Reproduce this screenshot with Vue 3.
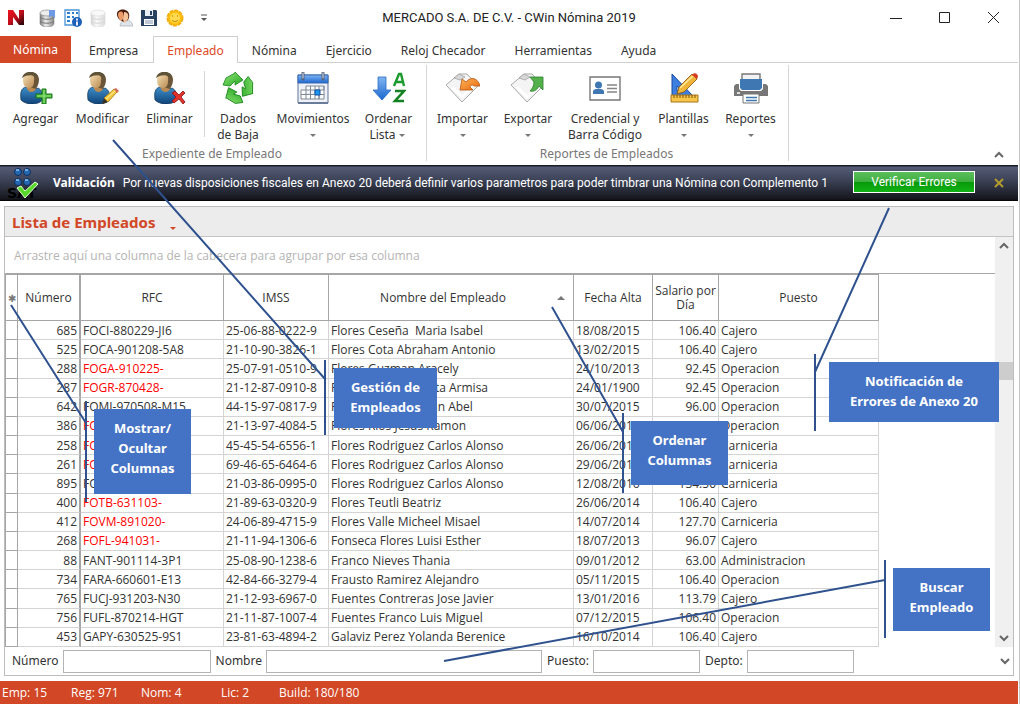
<template>
  <div class="window">
    <svg class="sprite" aria-hidden="true">
      <defs>
        <linearGradient id="gBody" x1="0" y1="0" x2="0" y2="1">
          <stop offset="0" stop-color="#3f8fca" />
          <stop offset="1" stop-color="#0f4379" />
        </linearGradient>
        <linearGradient id="gFace" x1="0" y1="0" x2="1" y2="1">
          <stop offset="0" stop-color="#f6e0b4" />
          <stop offset="1" stop-color="#b98a52" />
        </linearGradient>
        <linearGradient id="gGreen" x1="0" y1="0" x2="1" y2="1">
          <stop offset="0" stop-color="#94e877" />
          <stop offset="1" stop-color="#23a423" />
        </linearGradient>
        <linearGradient id="gBlue" x1="0" y1="0" x2="0" y2="1">
          <stop offset="0" stop-color="#7fb6f2" />
          <stop offset="1" stop-color="#1c66cf" />
        </linearGradient>
        <linearGradient id="gOrange" x1="0" y1="0" x2="1" y2="1">
          <stop offset="0" stop-color="#ffb45a" />
          <stop offset="1" stop-color="#e8680c" />
        </linearGradient>
        <linearGradient id="gLogo" x1="0" y1="0" x2="1" y2="1">
          <stop offset="0" stop-color="#f0141e" />
          <stop offset="0.5" stop-color="#c00d1b" />
          <stop offset="1" stop-color="#1b0206" />
        </linearGradient>
        <linearGradient id="gDisk" x1="0" y1="0" x2="1" y2="0">
          <stop offset="0" stop-color="#777" />
          <stop offset="0.4" stop-color="#eee" />
          <stop offset="1" stop-color="#888" />
        </linearGradient>
      </defs>
      <symbol id="person" viewBox="0 0 32 32">
        <path d="M1 28C0 21 1 16 6 15l7 3 5-2c4 2 5 6 5 11-3 6-16 7-22 1z" fill="url(#gBody)" stroke="#0d3358" stroke-width=".7" />
        <path d="M7 13v4c2 4 7 4 9 0v-4z" fill="#b98a52" />
        <path d="M9 2c5-3 10 0 10 6 0 4-2 7-3 9l-6-2z" fill="#6b5539" />
        <path d="M3 8c0-4 3-6 6-6 4 0 6 3 5 7 0 5-2 7-5 7-4 0-6-3-6-8z" fill="url(#gFace)" />
        <path d="M2 6C3 1 8-1 13 0c3 1 5 3 5 6-4-3-10-4-16 0z" fill="#5e5238" />
      </symbol>
      <symbol id="agregar" viewBox="0 0 32 32">
        <use href="#person" width="32" height="32" />
        <path d="M22 17h4v5h6v4h-6v6h-4v-6h-6v-4h6z" fill="#4dbb3d" stroke="#14701a" />
        <path d="M24 18v13M17 24h14" stroke="#9be283" stroke-width="1" />
      </symbol>
      <symbol id="modificar" viewBox="0 0 32 32">
        <use href="#person" width="32" height="32" />
        <path d="M15 32l2-6 4 4z" fill="#3b3021" />
        <path d="M17 26L27 17l3 3-9 10z" fill="#f5c93c" stroke="#a67714" stroke-width=".8" />
        <path d="M27 17l2-1 3 3-2 2z" fill="#d96b5c" />
        <path d="M19 27l9-8" stroke="#fff0a8" />
      </symbol>
      <symbol id="eliminar" viewBox="0 0 32 32">
        <use href="#person" width="32" height="32" />
        <path d="M18 21l3-2 4 4 4-4 2 2-4 4 4 5-2 2-4-5-5 4-2-2 4-4z" fill="#e0322d" stroke="#8d1010" stroke-width=".8" />
      </symbol>
      <symbol id="flecha" viewBox="0 0 32 32">
        <path d="M1 13l3-7 9-5V0l8 8-8 5V9l-5 5z" fill="url(#gGreen)" stroke="#178517" stroke-width=".8" />
      </symbol>
      <symbol id="reciclar" viewBox="0 0 32 32">
        <use href="#flecha" width="32" height="32" />
        <use href="#flecha" width="32" height="32" transform="rotate(120 16 16)" />
        <use href="#flecha" width="32" height="32" transform="rotate(240 16 16)" />
      </symbol>
      <symbol id="calendario" viewBox="0 0 32 32">
        <path d="M1 3h30v28H1z" fill="#eef2f8" stroke="#5e7394" />
        <path d="M1 3h30v8H1z" fill="url(#gBlue)" stroke="#3569b4" />
        <path d="M1 31h30" stroke="#6a7c99" stroke-width="2" />
        <path d="M9 14h18v4h-5v9H4v-9h5zM4 22.500h23V14M9 18h13M9 18v9M13.500 14v13M18 14v13M22 14v13M27 22v5h-5" fill="#fff" stroke="#7f8794" />
        <path d="M18 18h5v5h-5z" fill="#1d96ee" stroke="#1250a8" />
        <path d="M6 1v6M26 1v6" stroke="#53617a" stroke-width="3" stroke-linecap="round" />
        <path d="M6 1v5M26 1v5" stroke="#dce4f0" stroke-linecap="round" />
      </symbol>
      <symbol id="ordenar" viewBox="0 0 32 32">
        <path d="M4 5h8v13h5L8 28l-9-10h5z" transform="translate(1 0)" fill="url(#gBlue)" stroke="#2b6cc4" stroke-width=".8" />
        <path d="M21 14l5-12h2l3 12M23 10h7" fill="none" stroke="#199a2c" stroke-width="2.400" />
        <path d="M22 19h9L22 29h9" fill="none" stroke="#138222" stroke-width="2.600" />
      </symbol>
      <symbol id="hoja" viewBox="0 0 32 32">
        <path d="M0 13L13 2l8 0 11 12-16 16z" fill="#f4f4f4" stroke="#a9a9a9" />
        <path d="M8 6l5-4 6 3-5 3z" fill="#d8d8d8" stroke="#999" stroke-width=".7" />
        <path d="M6 15l10 10 10-10" fill="none" stroke="#fff" stroke-width="3" />
      </symbol>
      <symbol id="importar" viewBox="0 0 34 32">
        <use href="#hoja" width="32" height="32" />
        <path d="M14 18l2-11 4 3c5-6 12-4 14 4l-6 0c-2-2-3-1-4 1l3 3z" fill="url(#gOrange)" stroke="#b5560f" stroke-width=".8" />
      </symbol>
      <symbol id="exportar" viewBox="0 0 34 32">
        <use href="#hoja" width="32" height="32" />
        <path d="M19 5h13v13l-4-4c-2 4-5 6-9 5 2-2 4-5 4-9z" fill="#54b04a" stroke="#2c7d2c" stroke-width=".8" />
      </symbol>
      <symbol id="credencial" viewBox="0 0 32 32">
        <path d="M1 5h30v23H1z" fill="#fff" stroke="#777" stroke-width="1.400" />
        <circle cx="9.500" cy="13" r="3.500" fill="#3f77b3" />
        <path d="M4 22v-3c1-2 3-2 5.500-2s4.500 0 5.500 2v3z" fill="#3f77b3" />
        <path d="M18 13h10M18 16.500h10M18 20h10" stroke="#858585" stroke-width="1.600" />
      </symbol>
      <symbol id="plantillas" viewBox="0 0 32 32">
        <path d="M4 2l21 22H4zM9 14v5h5z" fill="#3c7fe0" stroke="#174d9e" fill-rule="evenodd" />
        <path d="M3 23h27v7H3z" fill="#f7c547" stroke="#a9741a" />
        <path d="M6 23v3M9 23v3M12 23v3M15 23v3M18 23v3M21 23v3M24 23v3M27 23v3" stroke="#80560d" />
        <path d="M9 22l2-7L24 2l5 5-13 13z" fill="#efb539" stroke="#7c4e10" stroke-width=".8" />
        <path d="M12 16L25 4" stroke="#ffe9a0" stroke-width="1.500" />
        <path d="M24 3c3-4 8 0 5 4z" fill="#d63c22" />
      </symbol>
      <symbol id="impresora" viewBox="0 0 34 32">
        <path d="M8 8V2h18v6" fill="#f2f2f2" stroke="#777" stroke-width="1.400" />
        <path d="M2 12h30l2 2v10H0V14z" fill="#777" />
        <path d="M5 7h24v10l-2 2H7l-2-2z" fill="#fff" />
        <path d="M6 7h22v9l-2 2H8l-2-2z" fill="#3f77b3" />
        <path d="M3 21h3" stroke="#fff" stroke-width="1.500" />
        <path d="M9 22h16v9H9z" fill="#fff" stroke="#777" />
        <path d="M12 25.500h11M12 28.500h11" stroke="#3f77b3" stroke-width="1.300" />
      </symbol>
      <symbol id="base" viewBox="0 0 18 18">
        <path d="M2 4v11c2 4 13 4 14 0V4z" fill="url(#gDisk)" stroke="#888" stroke-width=".6" />
        <ellipse cx="9" cy="4" rx="7" ry="3" fill="#ededed" stroke="#8b8b8b" stroke-width=".7" />
        <path d="M2 8c2 3 12 3 14 0M2 12c2 3 12 3 14 0" fill="none" stroke="#777" />
      </symbol>
      <symbol id="datos" viewBox="0 0 18 18">
        <use href="#base" width="18" height="18" />
        <path d="M11 1h6v8l-3-2-3 1z" fill="#6f9be6" />
      </symbol>
      <symbol id="hojas" viewBox="0 0 18 18">
        <path d="M1 1h14v15H1z" fill="#fff" stroke="#4c93d4" stroke-width="1.300" />
        <path d="M3 4h3M8 4h2M12 4h2M3 8h3M8 8h2M3 12h3" stroke="#2e7ed0" stroke-width="2" />
        <circle cx="13" cy="13" r="5" fill="#1c5fb8" />
        <path d="M13 9.500v2M13 12.500v4" stroke="#fff" stroke-width="1.800" />
      </symbol>
      <symbol id="usuarios" viewBox="0 0 18 18">
        <path d="M5 17c1-5 3-6 6-6 4 0 6 2 7 6z" fill="#dfe4ea" stroke="#9da3aa" stroke-width=".6" />
        <path d="M2 5c0-6 11-6 12 0 1 4-1 7-4 8-5-1-8-4-8-8z" fill="#45190c" />
        <path d="M3 5c1-3 4-3 5-1l1 5-3 3C4 10 3 8 3 5z" fill="#ec9c68" />
        <path d="M9 3c4 0 5 3 4 7l-3 4-2-3z" fill="#f7c49a" />
      </symbol>
      <symbol id="guardar" viewBox="0 0 18 18">
        <path d="M1 1h15l1 1v15H1z" fill="#27415f" />
        <path d="M5 1h8v6H5z" fill="#e8eef4" />
        <path d="M10 2h2v4h-2z" fill="#27415f" />
        <path d="M4 10h10v6H4z" fill="#fff" />
        <path d="M5 12h8M5 14h8" stroke="#8094aa" />
      </symbol>
      <symbol id="sol" viewBox="0 0 18 18">
        <circle cx="9" cy="9" r="7.500" fill="#ffc20e" stroke="#f5ae12" stroke-width="2" stroke-dasharray="4 .9" />
        <circle cx="9" cy="9" r="5" fill="#ffda4f" />
        <path d="M6 7h1M11 7h1M6 11c2 2 4 2 6 0" fill="none" stroke="#b97a00" />
      </symbol>
    </svg>

    <header class="title-bar">
      <div class="quick-bar">
        <svg class="logo" viewBox="0 0 16 16"><path d="M0 0h5l6 9V0h5v15h-5L5 7v8H0z" fill="url(#gLogo)" /></svg>
        <div class="quick-icons">
          <button v-for="q in quickActions" :key="q.label" class="quick-btn" :class="{ faded: q.faded }" :aria-label="q.label">
            <svg><use :href="'#' + q.icon" /></svg>
          </button>
        </div>
        <button class="quick-more" aria-label="Personalizar">
          <svg viewBox="0 0 8 8"><path d="M1 1h6" stroke="#555" /><path d="M1 4h6L4 7z" fill="#555" /></svg>
        </button>
      </div>
      <h1 class="window-title">MERCADO S.A. DE C.V. - CWin Nómina 2019</h1>
      <div class="window-buttons">
        <button aria-label="Minimizar"><svg viewBox="0 0 12 12"><path d="M0 6.500h12" /></svg></button>
        <button aria-label="Maximizar"><svg viewBox="0 0 12 12"><path d="M.5.5h10v10H.5z" /></svg></button>
        <button aria-label="Cerrar"><svg viewBox="0 0 12 12"><path d="M0 0l11 11M11 0L0 11" /></svg></button>
      </div>
    </header>

    <nav class="tabs">
      <button class="tab file-tab">Nómina</button>
      <button
        v-for="tab in tabs"
        :key="tab"
        class="tab"
        :class="{ active: tab === activeTab }"
        @click="activeTab = tab"
      >{{ tab }}</button>
    </nav>

    <section class="ribbon">
      <div v-for="group in ribbonGroups" :key="group.title" class="ribbon-group">
        <div class="ribbon-items">
          <button
            v-for="item in group.items"
            :key="item.icon"
            class="ribbon-btn"
            :class="[item.size, { divided: item.divided }]"
          >
            <svg class="ribbon-icon"><use :href="'#' + item.icon" /></svg>
            <span>{{ item.lines[0] }}</span>
            <span class="second-line">{{ item.lines[1] }}<i v-if="item.menu" class="caret"></i></span>
          </button>
        </div>
        <div class="ribbon-caption">{{ group.title }}</div>
      </div>
      <button class="collapse" aria-label="Contraer"><svg viewBox="0 0 10 7"><path d="M1 6l4-4 4 4" /></svg></button>
    </section>

    <section class="alert">
      <svg class="alert-icon" viewBox="0 0 32 36" aria-hidden="true">
        <g fill="#2368b0" stroke="#0d2f5e">
          <circle cx="11" cy="7" r="3.500" /><circle cx="20" cy="7" r="3.500" />
          <circle cx="11" cy="17" r="3.500" /><circle cx="20" cy="17" r="3.500" />
        </g>
        <path d="M9 5h3M18 5h3M9 15h3M18 15h3" stroke="#8fc4f2" stroke-width="1.500" />
        <text x="0" y="33" class="sat-text">SAT</text>
        <path d="M10 23l4-2 4 5 10-9 3 2-13 14z" fill="#58d92c" stroke="#e4ffd8" stroke-width="1" />
      </svg>
      <strong>Validación</strong>
      <p>Por nuevas disposiciones fiscales en Anexo 20 deberá definir varios parametros para poder timbrar una Nómina con Complemento 1</p>
      <button class="verify-btn">Verificar Errores</button>
      <button class="alert-close" aria-label="Cerrar aviso"><svg viewBox="0 0 10 10"><path d="M1 1l8 8M9 1L1 9" /></svg></button>
    </section>

    <main class="panel">
      <div class="panel-header">
        <h2>Lista de Empleados</h2>
        <i class="caret red"></i>
      </div>
      <div class="panel-body">
        <div class="grid-area">
          <div class="group-hint">Arrastre aquí una columna de la cabecera para agrupar por esa columna</div>
          <div class="table-wrap">
            <table class="employees">
              <colgroup>
                <col class="c-mark"><col class="c-num"><col class="c-rfc"><col class="c-imss"><col class="c-name"><col class="c-date"><col class="c-pay"><col class="c-job">
              </colgroup>
              <thead>
                <tr>
                  <th class="mark">✱</th>
                  <th class="num">Número</th>
                  <th>RFC</th>
                  <th>IMSS</th>
                  <th><div class="sorted"><span>Nombre del Empleado</span><i class="sort-arrow"></i></div></th>
                  <th>Fecha Alta</th>
                  <th>Salario por Día</th>
                  <th>Puesto</th>
                </tr>
              </thead>
              <tbody>
                <tr v-for="e in employees" :key="e.num">
                  <td class="mark"></td>
                  <td class="num">{{ e.num }}</td>
                  <td :class="{ invalid: e.invalid }">{{ e.rfc }}</td>
                  <td>{{ e.imss }}</td>
                  <td>{{ e.name }}</td>
                  <td>{{ e.date }}</td>
                  <td class="right">{{ e.pay }}</td>
                  <td>{{ e.job }}</td>
                </tr>
              </tbody>
            </table>
          </div>
        </div>
        <div class="scrollbar">
          <svg viewBox="0 0 10 7"><path d="M1 6l4-4 4 4" /></svg>
          <div class="thumb"></div>
          <svg viewBox="0 0 10 7"><path d="M1 1l4 4 4-4" /></svg>
        </div>
      </div>
      <form class="search-bar" @submit.prevent>
        <label for="s-num">Número</label>
        <input id="s-num" v-model="search.num" class="w-num" type="text">
        <label for="s-name">Nombre</label>
        <input id="s-name" v-model="search.name" class="w-name" type="text">
        <label for="s-job">Puesto:</label>
        <input id="s-job" v-model="search.job" class="w-short" type="text">
        <label for="s-dept">Depto:</label>
        <input id="s-dept" v-model="search.dept" class="w-short" type="text">
        <svg class="search-more" viewBox="0 0 10 7"><path d="M1 1l4 4 4-4" /></svg>
      </form>
    </main>

    <footer class="status-bar">
      <span class="s-emp">Emp: 15</span>
      <span class="s-reg">Reg: 971</span>
      <span class="s-nom">Nom: 4</span>
      <span class="s-lic">Lic: 2</span>
      <span>Build: 180/180</span>
    </footer>

    <!-- Notas de ayuda sobre la ventana -->
    <svg class="leaders" aria-hidden="true">
      <path d="M11 305L86 423M86 401v101" />
      <path d="M113 140L325 379M325 360v75" />
      <path d="M552 307L623 432M623 413v80" />
      <path d="M889 208L815 372M815 354v77" />
      <path d="M444 661L885 580M885 560v78" />
    </svg>
    <div v-for="note in notes" :key="note.id" class="note" :class="note.id">
      <div v-for="line in note.lines" :key="line">{{ line }}</div>
    </div>
  </div>
</template>

<script setup>
import { ref, reactive } from 'vue'

const tabs = ['Empresa', 'Empleado', 'Nómina', 'Ejercicio', 'Reloj Checador', 'Herramientas', 'Ayuda']
const activeTab = ref('Empleado')

const search = reactive({ num: '', name: '', job: '', dept: '' })

const quickActions = [
  { icon: 'datos', label: 'Base de datos' },
  { icon: 'hojas', label: 'Información' },
  { icon: 'base', label: 'Respaldo', faded: true },
  { icon: 'usuarios', label: 'Usuarios' },
  { icon: 'guardar', label: 'Guardar' },
  { icon: 'sol', label: 'Apariencia' }
]

const ribbonGroups = [
  {
    title: 'Expediente de Empleado',
    items: [
      { icon: 'agregar', lines: ['Agregar', ''] },
      { icon: 'modificar', lines: ['Modificar', ''] },
      { icon: 'eliminar', lines: ['Eliminar', ''] },
      { icon: 'reciclar', lines: ['Dados', 'de Baja'], divided: true },
      { icon: 'calendario', lines: ['Movimientos', ''], size: 'wide', menu: true },
      { icon: 'ordenar', lines: ['Ordenar', 'Lista'], menu: true }
    ]
  },
  {
    title: 'Reportes de Empleados',
    items: [
      { icon: 'importar', lines: ['Importar', ''], menu: true },
      { icon: 'exportar', lines: ['Exportar', ''], size: 'narrow', menu: true },
      { icon: 'credencial', lines: ['Credencial y', 'Barra Código'], size: 'wider' },
      { icon: 'plantillas', lines: ['Plantillas', ''], menu: true },
      { icon: 'impresora', lines: ['Reportes', ''], menu: true }
    ]
  }
]

const employees = ref([
  { num: 685, rfc: 'FOCI-880229-JI6', imss: '25-06-88-0222-9', name: 'Flores Ceseña  Maria Isabel', date: '18/08/2015', pay: '106.40', job: 'Cajero' },
  { num: 525, rfc: 'FOCA-901208-5A8', imss: '21-10-90-3826-1', name: 'Flores Cota Abraham Antonio', date: '13/02/2015', pay: '106.40', job: 'Cajero' },
  { num: 288, rfc: 'FOGA-910225-', imss: '25-07-91-0510-9', name: 'Flores Guzman Aracely', date: '24/10/2013', pay: '92.45', job: 'Operacion', invalid: true },
  { num: 287, rfc: 'FOGR-870428-', imss: '21-12-87-0910-8', name: 'Flores Garcia Renata Armisa', date: '24/01/1900', pay: '92.45', job: 'Operacion', invalid: true },
  { num: 642, rfc: 'FOMJ-970508-M15', imss: '44-15-97-0817-9', name: 'Flores Martinez Juan Abel', date: '30/07/2015', pay: '96.00', job: 'Operacion' },
  { num: 386, rfc: 'FORJ-970413-', imss: '21-13-97-4084-5', name: 'Flores Rios Jesus Ramon', date: '06/06/2014', pay: '96.00', job: 'Operacion', invalid: true },
  { num: 258, rfc: 'FORC-540612-', imss: '45-45-54-6556-1', name: 'Flores Rodriguez Carlos Alonso', date: '26/06/2013', pay: '134.50', job: 'Carniceria', invalid: true },
  { num: 261, rfc: 'FORC-650612-', imss: '69-46-65-6464-6', name: 'Flores Rodriguez Carlos Alonso', date: '29/06/2013', pay: '134.50', job: 'Carniceria', invalid: true },
  { num: 895, rfc: 'FORC-860612-', imss: '21-03-86-0995-0', name: 'Flores Rodriguez Carlos Alonso', date: '12/08/2016', pay: '134.50', job: 'Carniceria' },
  { num: 400, rfc: 'FOTB-631103-', imss: '21-89-63-0320-9', name: 'Flores Teutli Beatriz', date: '26/06/2014', pay: '106.40', job: 'Cajero', invalid: true },
  { num: 412, rfc: 'FOVM-891020-', imss: '24-06-89-4715-9', name: 'Flores Valle Micheel Misael', date: '14/07/2014', pay: '127.70', job: 'Carniceria', invalid: true },
  { num: 268, rfc: 'FOFL-941031-', imss: '21-11-94-1306-6', name: 'Fonseca Flores Luisi Esther', date: '18/07/2013', pay: '96.07', job: 'Cajero', invalid: true },
  { num: 88, rfc: 'FANT-901114-3P1', imss: '25-08-90-1238-6', name: 'Franco Nieves Thania', date: '09/01/2012', pay: '63.00', job: 'Administracion' },
  { num: 734, rfc: 'FARA-660601-E13', imss: '42-84-66-3279-4', name: 'Frausto Ramirez Alejandro', date: '05/11/2015', pay: '106.40', job: 'Operacion' },
  { num: 765, rfc: 'FUCJ-931203-N30', imss: '21-12-93-6967-0', name: 'Fuentes Contreras Jose Javier', date: '13/01/2016', pay: '113.79', job: 'Cajero' },
  { num: 756, rfc: 'FUFL-870214-HGT', imss: '21-11-87-1007-4', name: 'Fuentes Franco Luis Miguel', date: '07/12/2015', pay: '106.40', job: 'Operacion' },
  { num: 453, rfc: 'GAPY-630525-9S1', imss: '23-81-63-4894-2', name: 'Galaviz Perez Yolanda Berenice', date: '16/10/2014', pay: '106.40', job: 'Cajero' }
])

const notes = [
  { id: 'note-columns', lines: ['Mostrar/', 'Ocultar', 'Columnas'] },
  { id: 'note-manage', lines: ['Gestión de', 'Empleados'] },
  { id: 'note-sort', lines: ['Ordenar', 'Columnas'] },
  { id: 'note-errors', lines: ['Notificación de', 'Errores de Anexo 20'] },
  { id: 'note-search', lines: ['Buscar', 'Empleado'] }
]
</script>

<style>
body {
  margin: 0;
  background: #fff;
}
</style>

<style scoped>
.window {
  position: relative;
  display: flex;
  flex-direction: column;
  height: 100vh;
  min-height: 640px;
  box-sizing: border-box;
  padding-right: 1px;
  border-right: 1px solid #c4c4c4;
  font-family: "Noto Sans", "Open Sans", sans-serif;
  font-size: 12px;
  line-height: 16px;
  color: #333;
  overflow: hidden;
}

.sprite {
  position: absolute;
  width: 0;
  height: 0;
}

button {
  font: inherit;
  color: inherit;
  background: none;
  border: none;
  padding: 0;
}

/* Title bar */
.title-bar {
  display: grid;
  grid-template-columns: 1fr auto 1fr;
  align-items: center;
  height: 36px;
  flex: none;
}

.quick-bar {
  display: flex;
  align-items: center;
  padding-left: 8px;
}

.logo {
  width: 16px;
  height: 16px;
}

.quick-icons {
  display: flex;
  justify-content: space-between;
  width: 146px;
  margin: 0 16px 0 14px;
}

.quick-btn,
.quick-btn svg {
  display: block;
  width: 18px;
  height: 18px;
}

.faded {
  opacity: 0.3;
}

.quick-more svg {
  display: block;
  width: 8px;
  height: 8px;
}

.window-title {
  margin: 0;
  font-family: Roboto, "Noto Sans", sans-serif;
  font-size: 13px;
  font-weight: 400;
  color: #222;
}

.window-buttons {
  display: flex;
  justify-content: flex-end;
}

.window-buttons button {
  display: flex;
  justify-content: center;
  align-items: center;
  width: 49px;
  height: 36px;
}

.window-buttons svg {
  width: 12px;
  height: 12px;
  fill: none;
  stroke: #222;
  overflow: visible;
}

/* Tabs */
.tabs {
  display: flex;
  height: 27px;
  flex: none;
  box-shadow: inset 0 -1px #cfcfcf;
}

.tab {
  margin-right: 1px;
  padding: 3px 14px 0;
  color: #333;
}

.tab.active {
  margin-right: 0;
  padding: 2px 13px 0;
  border: 1px solid #cfcfcf;
  border-bottom: 0;
  background: #fff;
  color: #dd4a26;
}

.tab.file-tab {
  width: 71px;
  padding: 0;
  margin-right: 4px;
  background: #d24726;
  color: #fff;
}

/* Ribbon */
.ribbon {
  display: flex;
  height: 102px;
  flex: none;
}

.ribbon-group {
  display: flex;
  flex-direction: column;
  margin: 2px 0 4px;
  padding: 0 4px 0 2px;
  border-right: 1px solid #d6d6d6;
}

.ribbon-items {
  display: flex;
  flex: none;
  height: 82px;
}

.ribbon-btn {
  display: flex;
  flex-direction: column;
  align-items: center;
  width: 67px;
  padding-top: 7px;
}

.ribbon-btn.narrow {
  width: 64px;
}

.ribbon-btn.wide {
  width: 84px;
}

.ribbon-btn.wider {
  width: 90px;
}

.ribbon-btn.divided {
  margin: 6px 0 10px 1px;
  padding-top: 1px;
  border-left: 1px solid #d6d6d6;
}

.ribbon-icon {
  flex: none;
  width: 34px;
  height: 32px;
  margin-bottom: 7px;
}

.second-line {
  display: flex;
  align-items: center;
  height: 16px;
}

.caret {
  width: 0;
  height: 0;
  margin: 0 3px;
  border: 3px solid transparent;
  border-top-color: #777;
  border-bottom: 0;
}

.ribbon-caption {
  text-align: center;
  color: #777;
  line-height: 14px;
}

.collapse {
  margin: auto 14px 7px auto;
}

.collapse svg,
.scrollbar svg,
.search-more {
  display: block;
  width: 10px;
  height: 7px;
  fill: none;
  stroke: #666;
  stroke-width: 2;
}

/* Validation alert */
.alert {
  display: flex;
  align-items: center;
  height: 36px;
  flex: none;
  background: linear-gradient(#1c1d24 0, #1c1d24 1px, #545b74 2px, #3a4054 45%, #15161c 95%, #000);
  color: #fff;
  white-space: nowrap;
}

.alert-icon {
  width: 32px;
  height: 36px;
  margin: 0 14px 0 7px;
}

.sat-text {
  font-family: "DejaVu Sans", sans-serif;
  font-size: 14px;
  font-weight: 700;
}

.alert p {
  flex: 1;
  min-width: 0;
  margin: 0 7px 0 8px;
  overflow: hidden;
  font-family: Roboto, "Noto Sans", sans-serif;
}

.verify-btn {
  width: 122px;
  height: 22px;
  margin-bottom: 2px;
  border: 1px solid #fff;
  background: linear-gradient(#5cc05c, #3fae3f 48%, #069a0a 52%, #12b316);
  color: #fff;
  font-family: Roboto, "Noto Sans", sans-serif;
}

.alert-close {
  margin: 0 14px 0 19px;
}

.alert-close svg {
  display: block;
  width: 10px;
  height: 10px;
  stroke: #b39b2e;
  stroke-width: 2;
}

/* Panel */
.panel {
  display: flex;
  flex-direction: column;
  flex: 1;
  min-height: 0;
  margin: 5px 4px 5px 4px;
  border: 1px solid #bdbdbd;
}

.panel-header {
  display: flex;
  align-items: center;
  height: 29px;
  flex: none;
  padding-left: 7px;
  background: #ececec;
  border-bottom: 1px solid #c4c4c4;
}

.panel-header h2 {
  margin: 0 12px 0 0;
  font-size: 15px;
  font-weight: 700;
  line-height: 20px;
  color: #d24726;
}

.caret.red {
  margin-top: 13px;
  border-top-color: #d24726;
}

.panel-body {
  display: flex;
  flex: 1;
  min-height: 0;
  font-family: "Open Sans", "Noto Sans", sans-serif;
}

.grid-area {
  display: flex;
  flex-direction: column;
  flex: 1;
  min-width: 0;
}

.group-hint {
  height: 36px;
  flex: none;
  padding-left: 9px;
  line-height: 38px;
  color: #b4b4b4;
}

.table-wrap {
  flex: 1;
  min-height: 0;
  border-top: 1px solid #a6a6a6;
}

.employees {
  width: 874px;
  height: 100%;
  table-layout: fixed;
  border-collapse: separate;
  border-spacing: 0;
  border-left: 1px solid #a6a6a6;
}

.c-mark { width: 12px; }
.c-num { width: 63px; }
.c-rfc { width: 143px; }
.c-imss { width: 105px; }
.c-name { width: 245px; }
.c-date { width: 79px; }
.c-pay { width: 66px; }
.c-job { width: 160px; }

.employees th,
.employees td {
  box-sizing: border-box;
  padding: 1px 2px 0;
  border-right: 1px solid #d4d4d4;
  border-bottom: 1px solid #d4d4d4;
  white-space: pre;
  overflow: hidden;
}

.employees th {
  height: 47px;
  padding: 0;
  border-top: 1px solid #a6a6a6;
  border-color: #a6a6a6;
  font-weight: 400;
  line-height: 14px;
  white-space: normal;
}

.employees td {
  height: 18px;
  line-height: 16px;
}

.employees .mark {
  padding: 0;
  border-color: #a6a6a6;
  font-size: 10px;
  color: #777;
}

.employees .num {
  border-right: 2px solid #a6a6a6;
}

.employees td.num,
.employees .right {
  text-align: right;
}

.employees .invalid {
  color: #f00;
}

.sorted {
  display: grid;
  grid-template-columns: 1fr 16px;
  align-items: center;
}

.sort-arrow {
  width: 0;
  height: 0;
  border: 4px solid transparent;
  border-top: 0;
  border-bottom-color: #777;
}

.scrollbar {
  display: flex;
  flex-direction: column;
  align-items: center;
  justify-content: space-between;
  width: 18px;
  padding: 5px 0;
  box-sizing: border-box;
  background: #f0f0f0;
}

.thumb {
  width: 18px;
  height: 18px;
  margin-bottom: 142px;
  background: #cdcdcd;
}

.search-bar {
  display: flex;
  align-items: center;
  height: 28px;
  flex: none;
  padding-left: 7px;
}

.search-bar label {
  margin-right: 4px;
}

.search-bar input {
  height: 23px;
  box-sizing: border-box;
  margin: 0 5px 0 0;
  padding: 0 4px;
  border: 1px solid #b4b4b4;
  font: inherit;
}

.w-num { width: 148px; }
.w-name { width: 276px; }
.w-short { width: 107px; }

.search-more {
  margin: 0 3px 0 auto;
}

/* Status bar */
.status-bar {
  display: flex;
  align-items: center;
  height: 23px;
  flex: none;
  padding-left: 2px;
  background: #d24726;
  color: #fff;
  font-family: "Open Sans", "Noto Sans", sans-serif;
}

.s-emp { width: 69px; }
.s-reg { width: 70px; }
.s-nom { width: 80px; }
.s-lic { width: 58px; }

/* Help notes */
.leaders {
  position: absolute;
  top: 0;
  left: 0;
  width: 100%;
  height: 100%;
  fill: none;
  stroke: #2f528f;
  stroke-width: 2;
  pointer-events: none;
}

.note {
  position: absolute;
  box-sizing: border-box;
  padding: 9px 0 11px;
  background: #4472c4;
  color: #fff;
  font-size: 13px;
  font-weight: 700;
  line-height: 20px;
  text-align: center;
}

.note-columns {
  left: 94px;
  top: 409px;
  width: 97px;
  height: 85px;
}

.note-manage {
  left: 334px;
  top: 368px;
  width: 103px;
}

.note-sort {
  left: 631px;
  top: 421px;
  width: 97px;
  height: 64px;
}

.note-errors {
  left: 829px;
  top: 362px;
  width: 170px;
}

.note-search {
  left: 893px;
  top: 568px;
  width: 97px;
  height: 63px;
}
</style>
